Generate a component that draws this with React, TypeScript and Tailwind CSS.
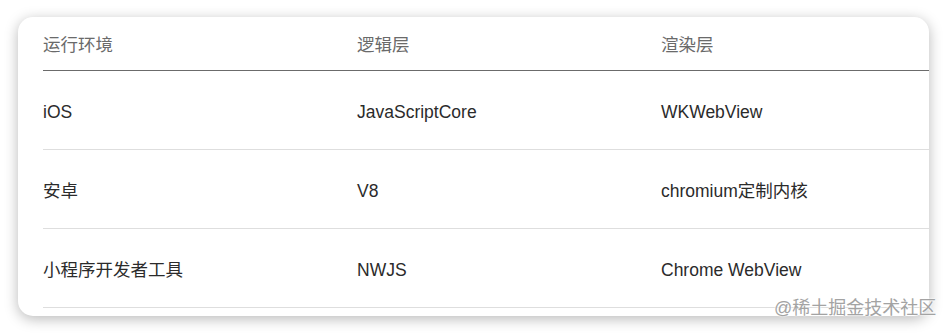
const rows = [
  ["iOS", "JavaScriptCore", "WKWebView"],
  ["安卓", "V8", "chromium定制内核"],
  ["小程序开发者工具", "NWJS", "Chrome WebView"],
];

const font = {
  fontFamily: '"Liberation Sans", "Noto Sans CJK SC", sans-serif',
};

export default function App() {
  return (
    <div
      className="relative w-[947px] h-[335px] bg-white pt-[17px] pl-[18px]"
      style={font}
    >
      {/* Card */}
      <div className="w-[911px] h-[299px] rounded-[15px] bg-white overflow-hidden pl-[25px] shadow-[0_3px_14px_rgba(0,0,0,0.28)]">
        <div className="grid grid-cols-[314px_304px_1fr] h-[54px] pt-[3px] items-center border-b border-[#6b6b6b] text-[17.5px] text-[#6a6a6a]">
          <div>运行环境</div>
          <div>逻辑层</div>
          <div>渲染层</div>
        </div>
        {rows.map((r) => (
          <div
            key={r[0]}
            className="grid grid-cols-[314px_304px_1fr] h-[79px] pt-[5px] items-center border-b border-[#dedede] text-[17.5px] text-[#2b2b2b]"
          >
            {r.map((c) => (
              <div key={c}>{c}</div>
            ))}
          </div>
        ))}
      </div>

      {/* Watermark */}
      <div className="absolute left-[774px] top-[296px] text-[18px] leading-[24px] text-[#a3a3a3] [text-shadow:0_0_2px_#fff,0_0_2px_#fff]">
        @稀土掘金技术社区
      </div>
    </div>
  );
}
